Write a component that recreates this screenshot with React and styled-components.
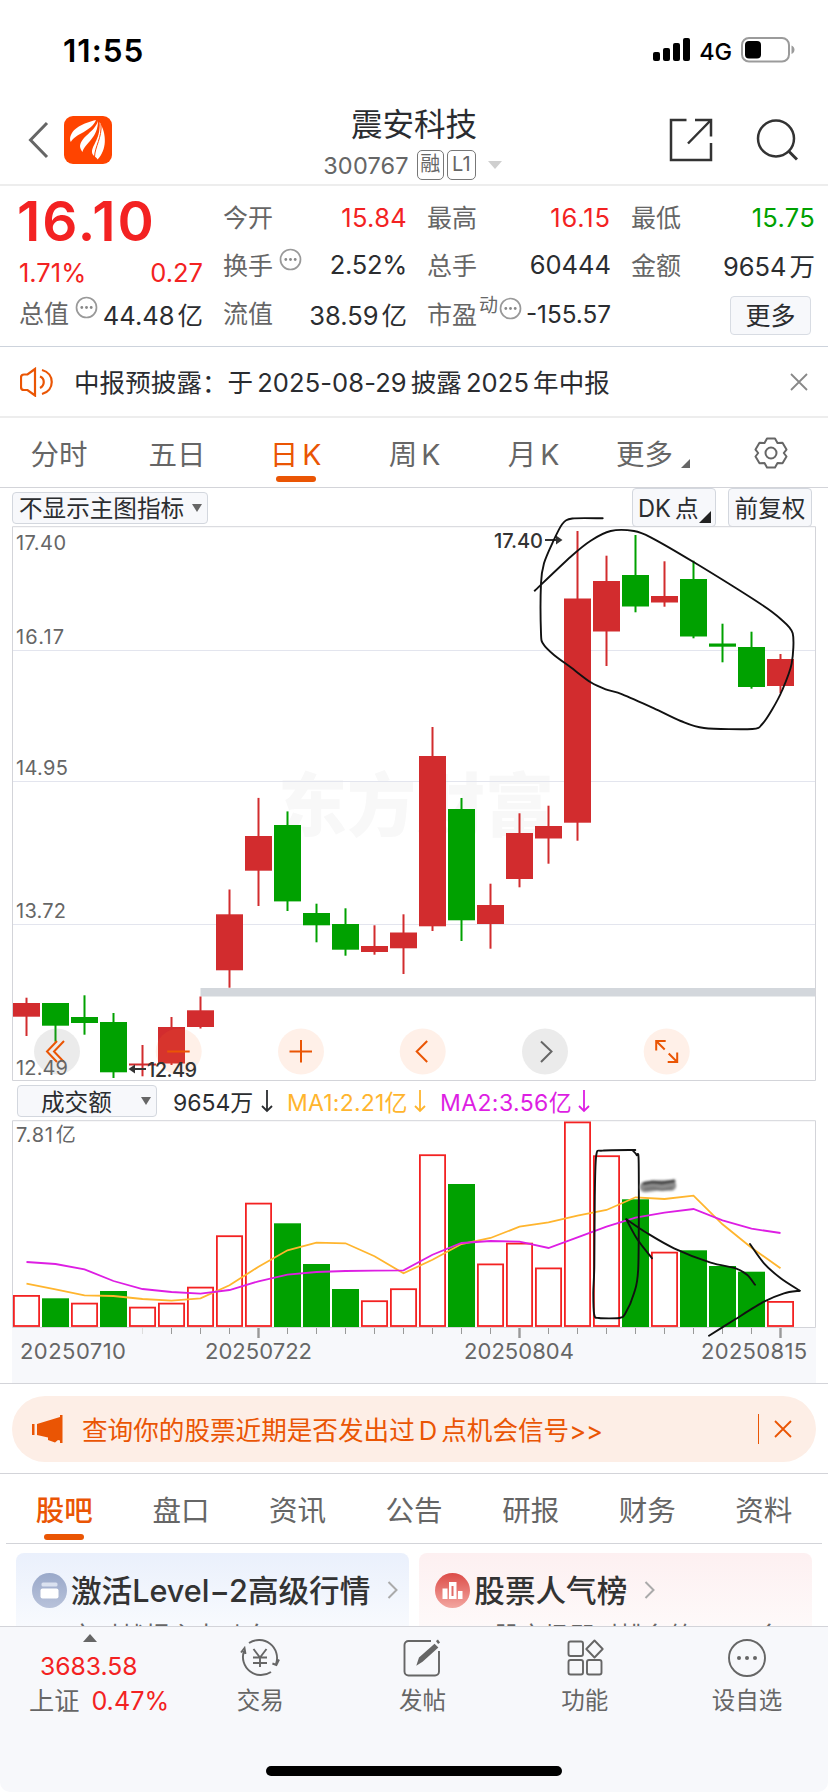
import React from 'react';
import styled, { createGlobalStyle } from 'styled-components';

const GlobalStyle = createGlobalStyle`
  * {
    box-sizing: border-box;
    margin: 0;
    padding: 0;
  }
  body {
    width: 828px;
    background: #ffffff;
    color: #2a2c30;
    font-family: Inter, 'Noto Sans CJK SC', sans-serif;
    -webkit-font-smoothing: antialiased;
  }
  svg {
    display: block;
    flex: none;
  }
`;

const colors = {
  red: '#f32222',
  green: '#00a100',
  candle: '#d22c2e',
  orange: '#ea5504',
  text: '#2b2d30',
  grey: '#666666',
  line: '#d3d4d9',
};

const Page = styled.main`
  width: 828px;
  height: 1792px;
  overflow: hidden;
  display: flex;
  flex-direction: column;
`;

const StatusBar = styled.div`
  height: 100px;
  padding: 0 33px 0 63px;
  display: flex;
  align-items: center;
  color: #000000;
`;

const Clock = styled.div`
  flex: 1;
  font-size: 31.5px;
  font-weight: 600;
  letter-spacing: 1px;
`;

const Network = styled.span`
  font-size: 23.5px;
  font-weight: 500;
  margin: 2px 9px 0 8px;
  letter-spacing: -0.1px;
`;

const Header = styled.header`
  height: 86px;
  padding: 0 30px 0 28px;
  display: grid;
  grid-template-columns: 160px 1fr 128px;
  border-bottom: 2px solid #ededed;
`;

const HeaderSide = styled.div`
  display: flex;
  align-items: center;
  gap: ${p => p.$gap}px;
  justify-content: ${p => (p.$end ? 'flex-end' : 'flex-start')};
  padding-bottom: 4px;
`;

const TitleBlock = styled.div`
  display: flex;
  flex-direction: column;
  align-items: center;
  padding: 4px 0 0 0;
`;

const StockName = styled.h1`
  font-size: 31.5px;
  font-weight: 400;
  line-height: 42px;
  margin-right: 30px;
`;

const CodeRow = styled.div`
  display: flex;
  align-items: center;
  height: 34px;
  margin-right: 33px;
  padding-top: 4px;
  font-size: 23.5px;
  letter-spacing: 0.2px;
  color: ${colors.grey};
`;

const Badge = styled.span`
  width: ${p => p.$w}px;
  height: 30px;
  margin-left: ${p => p.$ml}px;
  border: 1.5px solid #777777;
  border-radius: 5px;
  font-size: 20px;
  line-height: 27px;
  text-align: center;
`;

const CodeCaret = styled.i`
  border: 7px solid transparent;
  border-top: 8px solid #cfcfcf;
  border-bottom: 0;
  margin-left: 12px;
`;

const Quote = styled.section`
  height: 161px;
  padding: 9px 13px 0 19px;
  display: grid;
  grid-template-columns: repeat(4, 184px);
  column-gap: 20px;
  border-bottom: 1.5px solid #cdd3dc;
`;

const QuoteColumn = styled.div`
  display: flex;
  flex-direction: column;
`;

const Price = styled.div`
  height: 54px;
  color: ${colors.red};
  font-size: 55px;
  font-weight: 600;
  line-height: 52px;
  letter-spacing: 2px;
  margin-left: -2px;
`;

const Cell = styled.div`
  height: ${p => p.$h || 48}px;
  display: flex;
  align-items: center;
  justify-content: space-between;
  font-size: ${p => p.$fs || 25.5}px;
  letter-spacing: ${p => p.$ls || 0}px;
  white-space: nowrap;
  color: ${p => p.$color || colors.text};
`;

const CellLabel = styled.span`
  display: flex;
  align-items: center;
  gap: 6px;
  margin-top: -2px;
  color: ${colors.grey};
  font-size: 25px;
  letter-spacing: 0;

  sup {
    font-size: 19px;
    line-height: 20px;
    margin: -13px -5px 0 -4px;
  }
  svg {
    margin-top: -9px;
  }
`;

const Unit = styled.span`
  margin-left: 3px;
`;

const MoreButton = styled.button`
  align-self: flex-end;
  width: 81px;
  height: 39px;
  margin: 6px 4px 0 0;
  border: 1.5px solid #d8dce3;
  border-radius: 4px;
  background: #f7f8fb;
  font: 400 25px/34px Inter, 'Noto Sans CJK SC', sans-serif;
  color: ${colors.text};
`;

const Notice = styled.section`
  height: 71px;
  padding: 0 20px;
  display: flex;
  align-items: center;
  border-bottom: 2px solid #ededed;
`;

const NoticeText = styled.p`
  flex: 1;
  margin: -3px 0 0 19px;
  font-size: 25.5px;
  letter-spacing: 0.1px;
`;

// Latin run inside a Chinese sentence
const Latin = styled.span`
  margin: 0 ${p => (p.$end ? 0 : 4)}px 0 4px;
`;

const PeriodTabs = styled.nav`
  height: 70px;
  display: grid;
  grid-template-columns: 118px 118px 119px 119px 119px 120px 115px;
  border-bottom: 1.5px solid ${colors.line};
`;

const Tab = styled.button`
  position: relative;
  display: flex;
  align-items: center;
  justify-content: center;
  padding-top: ${p => p.$top || 4}px;
  border: 0;
  background: none;
  color: ${p => (p.$active ? colors.orange : colors.grey)};
  font: ${p => (p.$active && p.$bold ? 500 : 400)} 28.5px/40px Inter, 'Noto Sans CJK SC', sans-serif;
  white-space: nowrap;

  &::after {
    content: '';
    display: ${p => (p.$active ? 'block' : 'none')};
    position: absolute;
    left: calc(50% - 20px);
    bottom: ${p => p.$bottom || 5}px;
    width: 40px;
    height: 6px;
    border-radius: 3px;
    background: ${colors.orange};
  }
`;

const Corner = styled.i`
  align-self: flex-end;
  border-left: ${p => p.$s}px solid transparent;
  border-bottom: ${p => p.$s}px solid ${p => p.$c};
  margin: 0 0 ${p => p.$mb}px ${p => p.$ml}px;
`;

const ChartArea = styled.section`
  position: relative;
  height: 896px;
  border-bottom: 1.5px solid ${colors.line};
`;

const ChartTools = styled.div`
  height: 38px;
  padding: 1px 16px 0 12px;
  display: flex;
  align-items: center;
`;

const ToolButton = styled.button`
  width: ${p => p.$w}px;
  height: ${p => p.$h}px;
  margin-left: ${p => p.$ml || 0}px;
  padding-left: ${p => p.$pl || 0}px;
  padding-top: 3px;
  display: flex;
  align-items: center;
  justify-content: ${p => (p.$pl ? 'flex-start' : 'center')};
  border: 1.5px solid #d3d7de;
  border-radius: 4px;
  background: #f7f8fb;
  color: ${colors.text};
  font: 400 23.6px/26px Inter, 'Noto Sans CJK SC', sans-serif;
  white-space: nowrap;
`;

const Spacer = styled.div`
  flex: 1;
`;

const DownCaret = styled.i`
  border: 5px solid transparent;
  border-top: 8px solid #666666;
  border-bottom: 0;
  margin: -3px 0 0 ${p => p.$ml}px;
`;

const VolumeHeader = styled.div`
  height: 39px;
  padding: 1px 0 0 17px;
  display: flex;
  align-items: center;
  font-size: 23px;
`;

const Reading = styled.span`
  display: flex;
  align-items: center;
  margin-left: ${p => p.$ml}px;
  width: ${p => p.$w}px;
  justify-content: space-between;
  color: ${p => p.$color};
  white-space: nowrap;
  letter-spacing: ${p => p.$ls || 0}px;
`;

const MarkupLayer = styled.svg`
  position: absolute;
  left: 0;
  top: 0;
`;

const PromoWrap = styled.section`
  height: 90px;
  padding: 12px 12px 0;
  border-bottom: 1.5px solid ${colors.line};
`;

const Promo = styled.div`
  height: 66px;
  padding: 0 24px 0 20px;
  display: flex;
  align-items: center;
  border-radius: 33px;
  background: #fdeee6;
  color: ${colors.orange};
  font-size: 25.6px;

  p {
    flex: 1;
    margin: -1px 0 0 19px;
  }
`;

const PromoDivider = styled.i`
  width: 1.5px;
  height: 30px;
  margin-right: 15px;
  background: ${colors.orange};
`;

const SectionTabs = styled.nav`
  height: 70px;
  margin: 0 6px;
  display: grid;
  grid-template-columns: repeat(7, 116.6px);
  border-bottom: 1.5px solid ${colors.line};
`;

const Cards = styled.section`
  height: 82px;
  padding: 9px 16px 0;
  display: grid;
  grid-template-columns: 1fr 1fr;
  gap: 10px;
  overflow: hidden;
`;

const Card = styled.article`
  height: 110px;
  padding: 15px 10px 0 16px;
  border-radius: 8px 8px 0 0;
  background: linear-gradient(${p => p.$from}, ${p => p.$to} 80px);
`;

const CardTitle = styled.h2`
  height: 44px;
  display: flex;
  align-items: center;
  font-size: 30.6px;
  font-weight: 500;
  color: #333333;
  white-space: nowrap;

  span {
    margin: -3px 17px 0 4px;
  }
`;

const CardSub = styled.p`
  margin: 6px 0 0 ${p => p.$ml}px;
  font-size: 25px;
  line-height: 36px;
  color: #666666;
  white-space: nowrap;

  b {
    font-weight: 400;
    color: #f3a274;
  }
`;

const BottomBar = styled.footer`
  position: relative;
  height: 166px;
  padding-left: 16px;
  display: grid;
  grid-template-columns: 163px repeat(4, 162.3px);
  border-top: 1.5px solid ${colors.line};
  border-radius: 0 0 10px 10px;
  background: #f7f8fb;
  color: ${colors.grey};
`;

const IndexBlock = styled.div`
  padding: 7px 0 0 13px;
  font-size: 25.2px;
  display: flex;
  flex-direction: column;
`;

const UpCaret = styled.i`
  width: 14px;
  border: 7px solid transparent;
  border-bottom: 8px solid #666666;
  border-top: 0;
  margin-left: 54px;
`;

const IndexValue = styled.div`
  margin: 8px 0 0 11px;
  line-height: 32px;
  font-size: 24.7px;
  color: ${colors.red};
`;

const IndexChange = styled.div`
  display: flex;
  gap: 12px;
  margin-top: 2px;
  line-height: 35px;
  white-space: nowrap;

  b {
    font-weight: 400;
    color: ${colors.red};
  }
`;

const NavItem = styled.div`
  display: flex;
  flex-direction: column;
  align-items: center;
  padding-top: 11px;
  font-size: 23.5px;
  line-height: 34px;

  svg {
    margin-bottom: 6px;
  }
`;

const HomeIndicator = styled.i`
  position: absolute;
  left: 266px;
  bottom: 16px;
  width: 296px;
  height: 10px;
  border-radius: 5px;
  background: #000000;
`;

// [rising, body top, body bottom, wick top, wick bottom]
const candles = [
  [1, 1003, 1016.7, 997.7, 1036],
  [0, 1003, 1025.7, 1003, 1041.7],
  [0, 1017, 1023, 995.3, 1034.7],
  [0, 1022, 1072.3, 1013, 1078],
  [1, 1063.5, 1065.5, 1045, 1076.3],
  [1, 1027, 1063.5, 1017, 1065],
  [1, 1010.3, 1027, 996.5, 1028.5],
  [1, 914.3, 970.3, 889.5, 987.7],
  [1, 836, 870.7, 797.9, 906],
  [0, 825, 901.4, 811.4, 911],
  [0, 913, 925.3, 903.7, 942.3],
  [0, 924, 949.7, 908.3, 955.7],
  [1, 946, 952, 925.3, 954.7],
  [1, 932.5, 948.3, 914.3, 974],
  [1, 756, 926.3, 727, 931],
  [0, 809, 920.3, 798, 941],
  [1, 905, 924, 883.7, 948.7],
  [1, 833, 879, 813.3, 887.3],
  [1, 826, 838.5, 805.7, 863.7],
  [1, 598.5, 822.7, 531, 840.7],
  [1, 581, 631.5, 555.7, 666],
  [0, 575, 606.5, 535, 612.3],
  [1, 596, 602.5, 561.3, 606.7],
  [0, 579, 636.5, 560.7, 638.3],
  [0, 643.5, 646.7, 623.7, 662.3],
  [0, 647, 687, 631.7, 688.7],
  [1, 659, 686, 654, 693],
];

const volumes = [
  1295, 1298.3, 1302.7, 1291, 1306.7, 1302.7, 1286.7, 1235.3, 1202.7, 1223.3, 1264, 1289, 1300.3, 1288.3,
  1154.3, 1184, 1263.5, 1242.7, 1267.5, 1121.5, 1155.3, 1199.3, 1251.7, 1250.3, 1266, 1271.7, 1301,
];
const volumeDown = [1, 3, 9, 10, 11, 15, 21, 23, 24, 25];

const ma1 = [
  1283.7, 1289.3, 1295.3, 1296, 1299, 1300.7, 1298.3, 1285.3, 1266.7, 1250.3, 1242.7, 1243.3, 1256.3, 1273.3,
  1259.7, 1244, 1238, 1226.7, 1222.3, 1215.7, 1210, 1197.3, 1199, 1195.7, 1224.3, 1247.7, 1268.3,
];
const ma2 = [
  1262, 1264, 1269.3, 1281, 1289, 1292, 1293.7, 1290, 1281.3, 1274.7, 1272, 1271, 1270.7, 1270.3, 1254.7, 1243,
  1241, 1241.7, 1248, 1237.3, 1226.7, 1217.7, 1212.7, 1209, 1220.3, 1228.7, 1233,
];

const circleStroke = [
  [602.7, 518.3], [572.3, 518.5], [562.3, 524], [552.3, 543.3], [544, 563.3], [541, 583.3], [541, 633.3],
  [543.3, 644], [554, 655], [570.7, 667.3], [590.7, 682.3], [605.7, 689.3], [622.3, 694.3], [654, 708.3],
  [680.7, 721], [704, 728], [752.3, 729], [762.3, 724], [772.3, 709.3], [782.3, 690], [791.7, 663.3],
  [792.7, 633.3], [780.7, 619], [760.7, 604], [694, 562.3], [650.7, 537.3], [634, 531], [610.7, 531],
  [590.7, 540.7], [570.7, 556.7], [534.7, 590.7],
];
const boxStroke = [
  [635.3, 1150], [602.7, 1150.6], [596.3, 1155], [594.8, 1196.7], [594.3, 1266.7], [593.3, 1293.3],
  [594.3, 1315], [599, 1318], [619, 1318], [625, 1314], [634, 1293.3], [638.3, 1266.7], [638.7, 1163.3],
  [636.7, 1155], [632.3, 1150],
];
const backStroke = [[652, 1258.3], [637.3, 1239.3], [626.3, 1219.3]];
const trendStroke = [
  [626.3, 1219.3], [647.3, 1233.3], [674, 1248.3], [710.7, 1262.7], [735.7, 1268.3], [747.3, 1275], [755, 1284.7],
];
const tipStroke = [[750, 1244], [764, 1263.3], [780.7, 1278.3], [799.7, 1290.7]];
const tailStroke = [[799.7, 1290.7], [784, 1293.3], [764, 1301.7], [734, 1320], [709, 1335.7]];

const x = i => 26.5 + i * 29;

// Catmull-Rom spline through the points of a pen stroke
const smooth = pts =>
  pts.slice(0, -1).reduce((d, p, i) => {
    const a = pts[i - 1] || p;
    const q = pts[i + 1];
    const b = pts[i + 2] || q;
    const k = 7;
    return `${d}C${p[0] + (q[0] - a[0]) / k} ${p[1] + (q[1] - a[1]) / k} ${q[0] - (b[0] - p[0]) / k} ${q[1] - (b[1] - p[1]) / k} ${q[0]} ${q[1]}`;
  }, `M${pts[0][0]} ${pts[0][1]}`);

const polyline = values => values.map((v, i) => `${x(i)},${v}`).join(' ');

function Info() {
  return (
    <svg width="23" height="23" viewBox="0 0 23 23" fill="none" stroke="#999" strokeWidth="1.7">
      <circle cx="11.5" cy="11.5" r="10" />
      <g fill="#888" stroke="none">
        <circle cx="6.8" cy="11.5" r="1.4" />
        <circle cx="11.5" cy="11.5" r="1.4" />
        <circle cx="16.2" cy="11.5" r="1.4" />
      </g>
    </svg>
  );
}

function Cross({ color }) {
  return (
    <svg width="18" height="18" viewBox="0 0 18 18" stroke={color} strokeWidth="1.8">
      <path d="M1 1l16 16M17 1L1 17" />
    </svg>
  );
}

function DownArrow() {
  return (
    <svg width="12" height="24" viewBox="0 0 12 24" fill="none" stroke="currentColor" strokeWidth="1.8">
      <path d="M6 1v21M1 17l5 5 5-5" />
    </svg>
  );
}

function Chevron() {
  return (
    <svg width="12" height="20" viewBox="0 0 12 20" fill="none" stroke="#aaa" strokeWidth="2">
      <path d="M1.500 2l8 8-8 8" />
    </svg>
  );
}

function RoundButton({ cx, grey, children }) {
  return (
    <g transform={`translate(${cx} 1051.5)`}>
      <circle r="23" stroke="none" fill={grey ? 'rgba(120,120,120,.15)' : 'rgba(255,120,50,.11)'} />
      {children}
    </g>
  );
}

function PriceChart() {
  return (
    <svg width="828" height="555" viewBox="0 526 828 555">
      <text x="278" y="831" fontSize="69" fontWeight="800" fill="#f8f8f8">东方财富</text>
      <path d="M12 650.5H816M12 781.5H816M12 924.5H816" stroke="#e3e5ee" />
      <rect x="200.5" y="988" width="615.5" height="8.5" fill="#d3d7dc" />
      <path d="M12.5 1080.5V526.7H815.5V1080.5z" fill="none" stroke={colors.line} />
      {candles.map(([up, top, bottom, high, low], i) => (
        <g key={i} fill={up ? colors.candle : colors.green}>
          <rect x={x(i) - 1} y={high} width="2" height={low - high} />
          <rect x={x(i) - 13.5} y={top} width="27" height={bottom - top} />
        </g>
      ))}
      <g fontSize="20" fill={colors.grey}>
        <text x="16" y="550" textLength="50">17.40</text>
        <text x="16" y="644" textLength="48">16.17</text>
        <text x="16" y="775" textLength="52">14.95</text>
        <text x="16" y="918" textLength="50">13.72</text>
      </g>
      <g fill="none" strokeWidth="2" stroke={colors.orange}>
        <RoundButton cx={57} grey>
          <path d="M7-10.5L-3 0 7 10.5M0-10.5L-10 0 0 10.5" />
        </RoundButton>
        <RoundButton cx={178.7}><path d="M-11.5 0h22.5" /></RoundButton>
        <RoundButton cx={301}><path d="M-11.5 0h22.5M0-11.5v22.5" /></RoundButton>
        <RoundButton cx={422.7}><path d="M4.5-10.5L-6 0 4.5 10.5" /></RoundButton>
        <RoundButton cx={545} grey><path d="M-4-10L6.5 0-4 10.5" stroke="#666" /></RoundButton>
        <RoundButton cx={666.7}>
          <path d="M-1-10.5H-10.5V-1M-10.5-10.5L-2-2M1 10.5H10.5V1M10.5 10.5L2 2" />
        </RoundButton>
      </g>
      <text x="16" y="1075" fontSize="20" fill={colors.grey} textLength="52">12.49</text>
      <g fontSize="20" fontWeight="500" fill="#333">
        <text x="494" y="547.5" textLength="49">17.40</text>
        <text x="147" y="1077" textLength="50">12.49</text>
        <path d="M556 535.5l6.500 4.500-6.500 4.500zM135 1064.500l-6.500 4.500 6.500 4.500z" />
        <path d="M545 540h14M132 1069h14" stroke="#333" strokeWidth="1.8" />
      </g>
    </svg>
  );
}

function VolumeChart() {
  return (
    <svg width="828" height="263" viewBox="0 1120 828 263">
      <rect x="12" y="1328" width="804" height="55" fill="#f7f8fb" />
      <path d="M12.5 1327.5V1120.7H815.5V1327.5z" fill="none" stroke={colors.line} />
      {volumes.map((top, i) =>
        volumeDown.includes(i) ? (
          <rect key={i} x={x(i) - 13.5} y={top} width="27" height={1327 - top} fill={colors.green} />
        ) : (
          <rect
            key={i}
            x={x(i) - 12.6}
            y={top + 0.9}
            width="25.2"
            height={1326 - top - 0.9}
            fill="none"
            stroke={colors.red}
            strokeWidth="1.8"
          />
        )
      )}
      <g fill="none" strokeWidth="1.8">
        <polyline points={polyline(ma1)} stroke="#ffb52e" />
        <polyline points={polyline(ma2)} stroke="#dd1ee3" />
      </g>
      {volumes.map((_, i) => {
        if (i < 4) return null;
        const major = i % 9 === 8;
        return (
          <path
            key={i}
            d={`M${x(i)} 1328v${major ? 10 : 6}`}
            stroke={i === 4 ? '#ddd' : '#999'}
            strokeWidth={major ? 2.4 : 1}
          />
        );
      })}
      <g fontSize="22" fill={colors.grey}>
        <text x="16" y="1141.5" fontSize="20">
          <tspan textLength="37">7.81</tspan>
          <tspan dx="2">亿</tspan>
        </text>
        <text x="20" y="1358.5" textLength="106">20250710</text>
        <text x="205" y="1358.5" textLength="107">20250722</text>
        <text x="464" y="1358.5" textLength="110">20250804</text>
        <text x="701" y="1358.5" textLength="106">20250815</text>
      </g>
    </svg>
  );
}

function Markup() {
  return (
    <MarkupLayer width="828" height="896" viewBox="0 488 828 896" fill="none" stroke="#111" strokeWidth="1.9" strokeLinecap="round">
      <defs>
        <filter id="smudge" x="-20%" y="-80%" width="140%" height="260%">
          <feGaussianBlur stdDeviation="0.9" />
        </filter>
      </defs>
      {[circleStroke, boxStroke, backStroke, trendStroke, tipStroke, tailStroke].map((s, i) => (
        <path key={i} d={smooth(s)} />
      ))}
      <g filter="url(#smudge)">
        <path d="M645 1187h1l10-1.500h15" stroke="#8d8d8d" strokeWidth="10.5" />
        <path d="M644 1183.500l8-1.500 10 1 12-2" stroke="#3f3f3f" strokeWidth="3" />
        <path d="M645 1189l9-1 8 2 10-2" stroke="#6d6d6d" strokeWidth="2" />
      </g>
    </MarkupLayer>
  );
}

const navItems = [
  {
    label: '交易',
    icon: (
      <>
        <path d="M10 5A18 18 0 0 1 37 26M40 21.500l-2.600 5.500-4-1.500M32 34A18 18 0 0 1 5 13M2 14.500L5.500 10 6.500 16" />
        <path d="M14.500 11l6.500 8.500 6.500-8.500M21 19.500V29M14 19.500h14M14 25h14" />
      </>
    ),
  },
  {
    label: '发帖',
    icon: (
      <>
        <path d="M30 3H7.500A4 4 0 0 0 3.500 7V33.500A4 4 0 0 0 7.500 37.500H34A4 4 0 0 0 38 33.500V13" />
        <path d="M17 25.500l1.800-5.500L33.500 7l2.500 2.500L21 23z" fill="#666" />
        <path d="M36 4.500l2-1.500" strokeWidth="3.5" />
      </>
    ),
  },
  {
    label: '功能',
    icon: (
      <>
        <rect x="4.5" y="3.5" width="14.5" height="14.5" rx="2" />
        <path d="M30.500 2.500l8.200 8.500-8.200 8.500-8.200-8.500z" strokeLinejoin="round" />
        <rect x="4.5" y="22" width="14.5" height="14.5" rx="2" />
        <rect x="23" y="22" width="14.5" height="14.5" rx="2" />
      </>
    ),
  },
  {
    label: '设自选',
    icon: (
      <>
        <circle cx="21" cy="20" r="18" />
        <g fill="#666" stroke="none">
          <circle cx="13" cy="20" r="2" />
          <circle cx="21" cy="20" r="2" />
          <circle cx="29" cy="20" r="2" />
        </g>
      </>
    ),
  },
];

const sections = ['股吧', '盘口', '资讯', '公告', '研报', '财务', '资料'];

export default function App() {
  return (
    <>
      <GlobalStyle />
      <Page>
        <StatusBar>
          <Clock>11:55</Clock>
          <svg width="38" height="24" viewBox="0 0 38 24">
            <rect x="0" y="14" width="7" height="9" rx="2" />
            <rect x="10" y="10" width="7" height="13" rx="2" />
            <rect x="20" y="5" width="7" height="18" rx="2" />
            <rect x="30" y="0" width="7" height="23" rx="2" />
          </svg>
          <Network>4G</Network>
          <svg width="54" height="26" viewBox="0 0 54 26">
            <rect x="1" y="1" width="47" height="23.5" rx="7" fill="none" stroke="#9b9b9b" strokeWidth="2" />
            <rect x="4" y="4" width="16" height="17.5" rx="4" />
            <path d="M50.500 8.500c4 1.500 4 7 0 8.500z" fill="#9b9b9b" />
          </svg>
        </StatusBar>

        <Header>
          <HeaderSide $gap={15}>
            <svg width="21" height="38" viewBox="0 0 21 38" fill="none" stroke="#666" strokeWidth="3">
              <path d="M19 2L2.500 19 19 36" />
            </svg>
            <svg width="48" height="48" viewBox="0 0 48 48">
              <rect width="48" height="48" rx="9" fill="#ff4400" />
              <g fill="#fff">
                <path d="M32 4C20 7 7 12 6 23c0 1 .3 2 .8 3C12 17 27 16 32 4z" />
                <path d="M34 5C30 17 18 19 16 30c0 2 1 4 2.500 6C21 27 34 22 34 5z" />
                <path d="M35.500 6C43 18 43 34 33.500 43.500 32 40 28 40 28 36 28 29 37 22 35.500 6z" />
              </g>
              <path d="M34.500 5c2 14-9 20-11.500 30M37 8c1 14-6 22-6.500 33" stroke="#ff4400" strokeWidth="1" fill="none" />
            </svg>
          </HeaderSide>
          <TitleBlock>
            <StockName>震安科技</StockName>
            <CodeRow>
              300767
              <Badge $w={27} $ml={8}>融</Badge>
              <Badge $w={29} $ml={3}>L1</Badge>
              <CodeCaret />
            </CodeRow>
          </TitleBlock>
          <HeaderSide $gap={43} $end>
            <svg width="44" height="44" viewBox="0 0 44 44" fill="none" stroke="#333" strokeWidth="2.5">
              <path d="M17.500 2H2V42H42V25M26 2H42V18.500M42 2L19 25.500" />
            </svg>
            <svg width="42" height="44" viewBox="0 0 42 44" fill="none" stroke="#333" strokeWidth="2.5">
              <circle cx="20" cy="20.5" r="18" />
              <path d="M33 33.500l8 8" strokeWidth="3" />
            </svg>
          </HeaderSide>
        </Header>

        <Quote>
          <QuoteColumn>
            <Price>16.10</Price>
            <Cell $color={colors.red} $h={46}><span>1.71%</span><span>0.27</span></Cell>
            <Cell $h={36}><CellLabel>总值<Info /></CellLabel><span>44.48<Unit>亿</Unit></span></Cell>
          </QuoteColumn>
          <QuoteColumn>
            <Cell $h={44} $color={colors.red} $ls={0.3}><CellLabel>今开</CellLabel>15.84</Cell>
            <Cell $h={51} $ls={-0.3}><CellLabel>换手<Info /></CellLabel>2.52%</Cell>
            <Cell $h={46}><CellLabel>流值</CellLabel><span>38.59<Unit>亿</Unit></span></Cell>
          </QuoteColumn>
          <QuoteColumn>
            <Cell $h={44} $color={colors.red} $ls={0.9}><CellLabel>最高</CellLabel>16.15</Cell>
            <Cell $h={51}><CellLabel>总手</CellLabel>60444</Cell>
            <Cell $h={47} $fs={24.3}><CellLabel>市盈<sup>动</sup><Info /></CellLabel>-155.57</Cell>
          </QuoteColumn>
          <QuoteColumn>
            <Cell $h={44} $color={colors.green} $ls={0.3}><CellLabel>最低</CellLabel>15.75</Cell>
            <Cell $h={51}><CellLabel>金额</CellLabel><span>9654<Unit>万</Unit></span></Cell>
            <MoreButton>更多</MoreButton>
          </QuoteColumn>
        </Quote>

        <Notice>
          <svg width="35" height="30" viewBox="0 0 35 30" fill="none" stroke={colors.orange} strokeWidth="2.2">
            <path d="M15 2L7.500 7.500H4A3 3 0 0 0 1 10.500V20A3 3 0 0 0 4 23H7.500L15 28.500z" />
            <path d="M20 9.500c5 2 5 9 0 11.500M22 3c13 3.500 13 20.500 0 24" />
          </svg>
          <NoticeText>中报预披露：于<Latin>2025-08-29</Latin>披露<Latin>2025</Latin>年中报</NoticeText>
          <Cross color="#888" />
        </Notice>

        <PeriodTabs>
          <Tab>分时</Tab>
          <Tab>五日</Tab>
          <Tab $active>日<Latin $end>K</Latin></Tab>
          <Tab>周<Latin $end>K</Latin></Tab>
          <Tab>月<Latin $end>K</Latin></Tab>
          <Tab>更多<Corner $s={9} $c="#666" $ml={8} $mb={19} /></Tab>
          <Tab $top={1}>
            <svg width="34" height="34" viewBox="0 0 34 34" fill="none" stroke="#666" strokeWidth="2" strokeLinejoin="round">
              <path d="M13 2.500h8l2.500 4.500 5-.2 4 6.800-2.700 3.400 2.700 3.500-4 6.800-5-.2L21 31.500h-8l-2.500-4.400-5 .2-4-6.800L4.200 17 1.500 13.600l4-6.800 5 .2z" />
              <circle cx="17" cy="17" r="5.5" />
            </svg>
          </Tab>
        </PeriodTabs>

        <ChartArea>
          <ChartTools>
            <ToolButton $w={196} $h={32} $pl={6}>不显示主图指标<DownCaret $ml={8} /></ToolButton>
            <Spacer />
            <ToolButton $w={84} $h={39} $pl={5}>DK<Latin $end>点</Latin><Corner $s={12} $c="#222" $ml={1} $mb={3} /></ToolButton>
            <ToolButton $w={84} $h={39} $ml={12}>前复权</ToolButton>
          </ChartTools>
          <PriceChart />
          <VolumeHeader>
            <ToolButton $w={140} $h={32} $pl={23}>成交额<DownCaret $ml={29} /></ToolButton>
            <Reading $ml={16} $w={100} $color={colors.text}>9654万<DownArrow /></Reading>
            <Reading $ml={14} $w={139} $ls={0.2} $color="#ffb52e">MA1:2.21亿<DownArrow /></Reading>
            <Reading $ml={14} $w={150} $ls={0.4} $color="#dd1ee3">MA2:3.56亿<DownArrow /></Reading>
          </VolumeHeader>
          <VolumeChart />
          <Markup />
        </ChartArea>

        <PromoWrap>
          <Promo>
            <svg width="31" height="28" viewBox="0 0 31 28" fill={colors.orange}>
              <path d="M0 9h2.500v11H0zM5 9L28 2V0h2.500v28H28v-2.500l-2-.5-3 2.500-7-2.500v-2.500L5 20z" />
            </svg>
            <p>查询你的股票近期是否发出过<Latin>D</Latin>点机会信号&gt;&gt;</p>
            <PromoDivider />
            <Cross color={colors.orange} />
          </Promo>
        </PromoWrap>

        <SectionTabs>
          {sections.map((s, i) => (
            <Tab key={s} $active={i === 0} $bold $top={5} $bottom={3}>{s}</Tab>
          ))}
        </SectionTabs>

        <Cards>
          <Card $from="#eaf0fc" $to="#f9fbfe">
            <CardTitle>
              <svg width="35" height="35" viewBox="0 0 35 35">
                <defs>
                  <linearGradient id="blue" x2="0" y2="1"><stop stopColor="#9aa9ca" /><stop offset="1" stopColor="#b8c2da" /></linearGradient>
                </defs>
                <circle cx="17.5" cy="17.5" r="17.5" fill="url(#blue)" />
                <rect x="9.5" y="9.5" width="16" height="4" rx="1.5" fill="#dbe2f0" />
                <rect x="8.5" y="15.5" width="18" height="10" rx="2" fill="#fff" />
              </svg>
              <span>激活Level−2高级行情</span>
              <Chevron />
            </CardTitle>
            <CardSub $ml={38}>实时战报主力动向</CardSub>
          </Card>
          <Card $from="#fdf0f1" $to="#fefafa">
            <CardTitle>
              <svg width="35" height="35" viewBox="0 0 35 35">
                <defs>
                  <linearGradient id="rose" x2="0" y2="1"><stop stopColor="#dc4c48" /><stop offset="1" stopColor="#f3a6a0" /></linearGradient>
                </defs>
                <circle cx="17.5" cy="17.5" r="17.5" fill="url(#rose)" />
                <path d="M7.500 15.500h5V26h-5zM14 9h7.500v17H14zM23 18h4.500v8H23z" fill="#fff" />
                <path d="M17.500 13v10" stroke="#e06b66" strokeWidth="2" />
              </svg>
              <span>股票人气榜</span>
              <Chevron />
            </CardTitle>
            <CardSub $ml={38}>A<Latin $end>股市场即时排名第</Latin><b>3756</b><Latin $end>名</Latin></CardSub>
          </Card>
        </Cards>

        <BottomBar>
          <IndexBlock>
            <UpCaret />
            <IndexValue>3683.58</IndexValue>
            <IndexChange>上证<b>0.47%</b></IndexChange>
          </IndexBlock>
          {navItems.map(item => (
            <NavItem key={item.label}>
              <svg width="42" height="40" viewBox="0 0 42 40" fill="none" stroke="#666" strokeWidth="1.9">
                {item.icon}
              </svg>
              {item.label}
            </NavItem>
          ))}
          <HomeIndicator />
        </BottomBar>
      </Page>
    </>
  );
}
